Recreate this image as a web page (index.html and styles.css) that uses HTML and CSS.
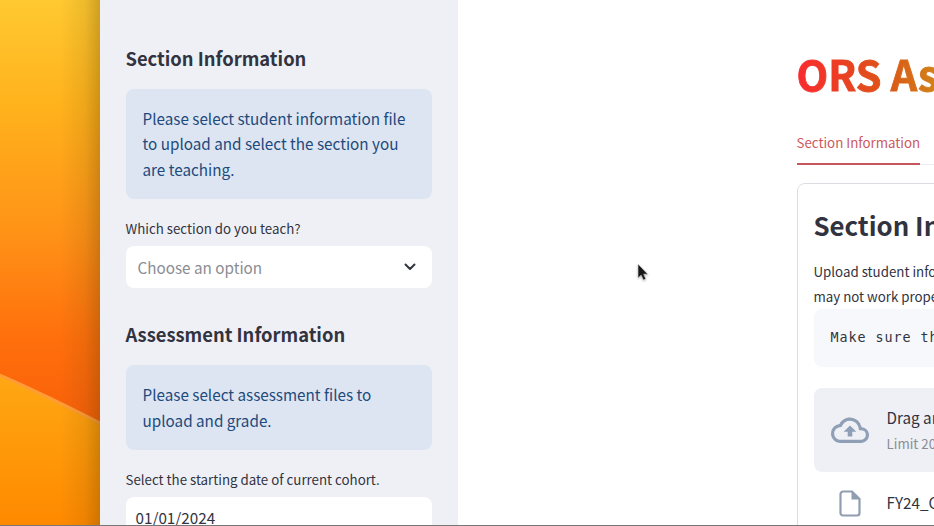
FILE: index.html
```html
<!DOCTYPE html>
<html lang="en">
<head>
<meta charset="utf-8">
<title>ORS Assessment</title>
<link rel="stylesheet" href="styles.css">
</head>
<body>
<div class="screen">
  <div class="wallpaper">
    <svg width="100" height="526" viewBox="0 0 100 526">
      <defs>
        <linearGradient id="sky" x1="0" y1="0" x2="0" y2="1">
          <stop offset="0" stop-color="#ffc931"/>
          <stop offset=".25" stop-color="#ffb21c"/>
          <stop offset=".55" stop-color="#ff9217"/>
          <stop offset=".8" stop-color="#ff6f0c"/>
          <stop offset="1" stop-color="#f86009"/>
        </linearGradient>
        <linearGradient id="dune" x1="0" y1="0" x2="0" y2="1">
          <stop offset="0" stop-color="#ffa813"/>
          <stop offset="1" stop-color="#ff8900"/>
        </linearGradient>
        <linearGradient id="shade" x1="0" y1="0" x2="1" y2="0">
          <stop offset=".6" stop-color="#503800" stop-opacity="0"/>
          <stop offset=".85" stop-color="#503800" stop-opacity=".1"/>
          <stop offset="1" stop-color="#503800" stop-opacity=".28"/>
        </linearGradient>
      </defs>
      <rect width="100" height="424" fill="url(#sky)"/>
      <path d="M0 374Q50 396 100 422V526H0Z" fill="url(#dune)"/>
      <path d="M0 375Q50 397 100 423" fill="none" stroke="#ff9c38" stroke-width="3"/>
      <rect width="100" height="526" fill="url(#shade)"/>
    </svg>
  </div>
  <aside class="sidebar">
    <h3 class="side-title">Section Information</h3>
    <div class="info">Please select student information file<br>to upload and select the section you<br>are teaching.</div>
    <div class="label">Which section do you teach?</div>
    <div class="select"><span class="placeholder">Choose an option</span>
      <svg width="12" height="8" viewBox="0 0 12 8"><path d="M1.5 1.5L6 6L10.500 1.500" fill="none" stroke="#31333f" stroke-width="2" stroke-linecap="round" stroke-linejoin="round"/></svg>
    </div>
    <h3 class="side-title second">Assessment Information</h3>
    <div class="info">Please select assessment files to<br>upload and grade.</div>
    <div class="label">Select the starting date of current cohort.</div>
    <div class="date">01/01/2024</div>
  </aside>
  <main class="main">
    <h1 class="title"><span>ORS Assessment</span></h1>
    <nav class="tabs"><span class="tab">Section Information</span></nav>
    <section class="card">
      <h2 class="card-title">Section Information</h2>
      <p class="copy">Upload student information<br>may not work properly</p>
      <div class="code">Make sure that</div>
      <div class="drop">
        <svg class="cloud" width="38" height="28.500" viewBox="0 0 24 18"><path d="M19.350 7.040A7.490 7.490 0 0 0 12 1C9.110 1 6.600 2.640 5.350 5.040A5.994 5.994 0 0 0 0 11c0 3.310 2.690 6 6 6h13c2.760 0 5-2.240 5-5 0-2.640-2.050-4.780-4.650-4.960zM19 15H6c-2.210 0-4-1.790-4-4 0-2.050 1.530-3.760 3.560-3.970l1.070-.11.5-.95A5.469 5.469 0 0 1 12 3c2.620 0 4.880 1.860 5.390 4.430l.3 1.500 1.530.11A2.980 2.980 0 0 1 22 12c0 1.650-1.350 3-3 3zM8 10h2.550v3h2.900v-3H16l-4-4z" fill="#8f9fb6"/></svg>
        <div class="drop-text"><div class="drop-main">Drag and drop</div><div class="drop-sub">Limit 200MB</div></div>
      </div>
      <div class="file">
        <svg width="22" height="27" viewBox="0 0 22 27"><path d="M4 1.500H13L20.500 9V23a2.500 2.500 0 0 1-2.500 2.500H4A2.500 2.500 0 0 1 1.500 23V4A2.500 2.500 0 0 1 4 1.500Z" fill="none" stroke="#919eb2" stroke-width="2.200"/><path d="M12.500 1.500V9.500H20.500Z" fill="#919eb2"/></svg>
        <span>FY24_Cohort</span>
      </div>
    </section>
  </main>
  <svg class="cursor" width="12" height="19" viewBox="0 0 12 19"><path d="M1 1V15L4.200 12.200L6.300 17L8.800 16L6.700 11.200H10.800Z" fill="#171719" stroke="#ddd" stroke-width=".6"/></svg>
  <div class="edge"></div>
</div>
</body>
</html>
```
FILE: styles.css
```css
* { box-sizing: border-box; }
body { margin: 0; overflow: hidden; background: #fff; }
.screen {
  position: relative;
  display: flex;
  width: 934px;
  height: 526px;
  overflow: hidden;
  font-family: "Noto Sans CJK SC", "Open Sans", sans-serif;
  font-size: 15.250px;
  color: #31333f;
  white-space: nowrap;
}
h1, h2, h3, p { margin: 0; }
.wallpaper { flex: 0 0 100px; }
.wallpaper svg { display: block; }
.sidebar {
  flex: 0 0 357.500px;
  padding: 43px 25.500px 0 25.500px;
  background: #eff0f6;
}
.side-title { height: 30px; margin-bottom: 15.500px; font-size: 18.350px; line-height: 30px; font-weight: 700; }
.side-title.second { margin-top: 31px; margin-bottom: 16px; }
.info {
  padding: 17px;
  border-radius: 8px;
  background: #dde5f2;
  color: #1e4a7c;
  line-height: 25.600px;
}
.label { margin: 19px 0 6px; height: 22px; line-height: 22px; font-size: 13.300px; }
.select {
  display: flex;
  align-items: center;
  justify-content: space-between;
  height: 42px;
  padding: 0 16.500px 0 12px;
  border-radius: 8px;
  background: #fff;
}
.placeholder { color: #8b8c94; line-height: 24px; margin-top: -1px; }
.date { height: 42px; padding-left: 10px; border-radius: 8px; background: #fff; line-height: 40px; }
.main { flex: 0 0 700px; padding: 49px 0 0 339px; }
.title { height: 50px; line-height: 48px; font-size: 41.200px; font-weight: 700; }
.title span {
  background: linear-gradient(90deg, #f92b2f 0, #ee3a25 35px, #dc5617 90px, #d18318 140px, #c8a020 200px);
  -webkit-background-clip: text;
  background-clip: text;
  color: transparent;
  -webkit-text-stroke: .9px transparent;
}
.tabs { display: flex; height: 66px; margin-bottom: 18px; padding-top: 30px; border-bottom: 1px solid #eceef4; }
.tab { height: 36px; border-bottom: 2px solid #c5565c; color: #cb595e; font-size: 13.300px; line-height: 27px; }
.card { height: 400px; padding: 25px 16px; border: 1px solid #dcdde2; border-radius: 8px; }
.card-title { height: 32px; font-size: 25.800px; line-height: 32px; }
.copy { margin-top: 19px; font-size: 13.300px; line-height: 24.500px; }
.code {
  height: 58px;
  padding-left: 17px;
  border-radius: 8px;
  background: #f7f8fc;
  font: 13.400px/58px "DejaVu Sans Mono", monospace;
  letter-spacing: .93px;
}
.drop { display: flex; align-items: center; height: 84px; margin-top: 21px; padding-left: 17px; border-radius: 8px; background: #eff0f6; }
.drop-text { margin-left: 18px; }
.drop-main { line-height: 26px; }
.drop-sub { color: #8b8c94; font-size: 13.300px; line-height: 27px; }
.file { display: flex; align-items: center; height: 28px; margin-top: 17px; padding-left: 25px; gap: 26px; }
.file span { margin-top: -2px; }
.cursor { position: absolute; left: 637px; top: 263px; filter: drop-shadow(0 1px 1px #0004); }
.edge { position: absolute; left: 0; right: 0; bottom: 0; height: 1px; background: #777; }
```
